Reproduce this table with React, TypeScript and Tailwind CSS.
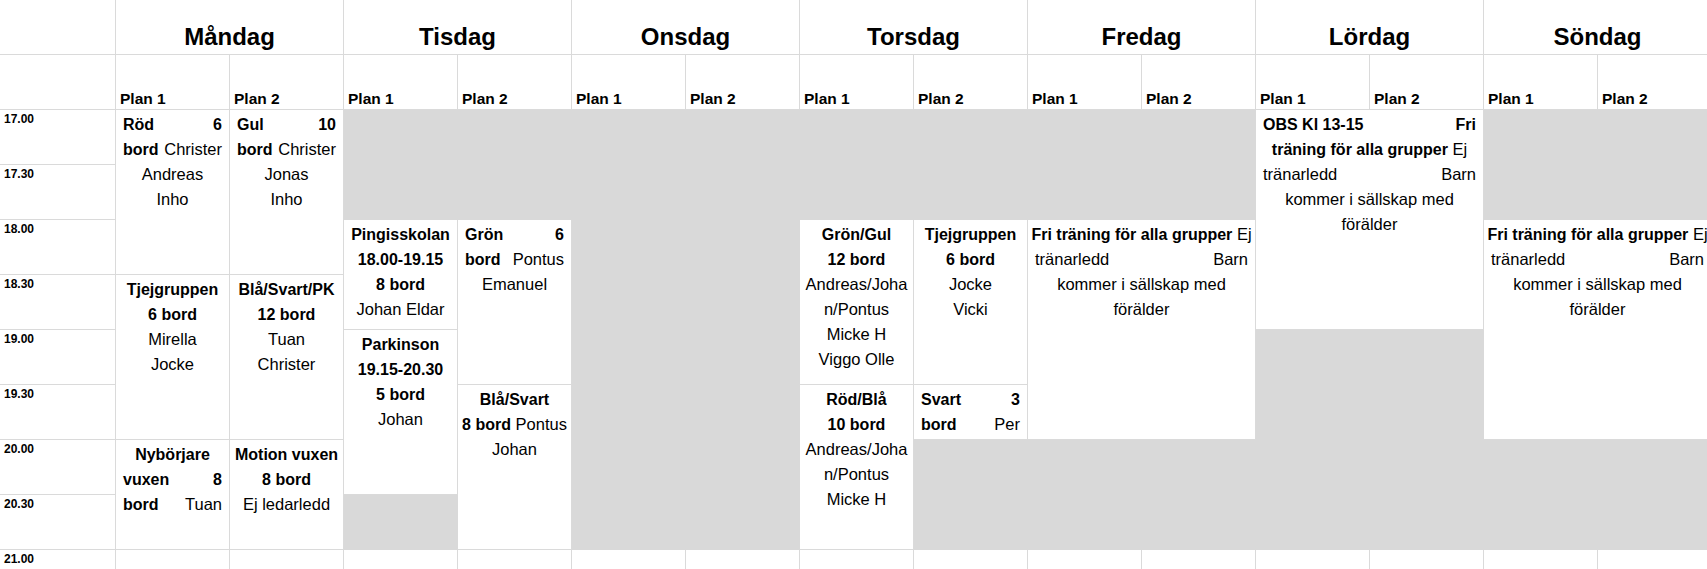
import React from 'react';
import clsx from 'clsx';

type Cell = {
  pos: string;
  lines?: string[];
  gray?: boolean;
};

const line = 'border-[#dadada]';

const days = [
  { name: 'Måndag', pos: 'col-start-2' },
  { name: 'Tisdag', pos: 'col-start-4' },
  { name: 'Onsdag', pos: 'col-start-6' },
  { name: 'Torsdag', pos: 'col-start-8' },
  { name: 'Fredag', pos: 'col-start-10' },
  { name: 'Lördag', pos: 'col-start-12' },
  { name: 'Söndag', pos: 'col-start-14' },
];

const planCols = [
  'col-start-2', 'col-start-3', 'col-start-4', 'col-start-5', 'col-start-6', 'col-start-7', 'col-start-8',
  'col-start-9', 'col-start-10', 'col-start-11', 'col-start-12', 'col-start-13', 'col-start-14', 'col-start-15',
];

const times = [
  { t: '17.00', pos: 'row-start-3' },
  { t: '17.30', pos: 'row-start-4' },
  { t: '18.00', pos: 'row-start-5' },
  { t: '18.30', pos: 'row-start-6' },
  { t: '19.00', pos: 'row-start-7' },
  { t: '19.30', pos: 'row-start-8' },
  { t: '20.00', pos: 'row-start-9' },
  { t: '20.30', pos: 'row-start-10' },
  { t: '21.00', pos: 'row-start-11' },
];

const friTraning = ['*Fri träning för alla grupper* Ej', 'tränarledd|Barn', 'kommer i sällskap med', 'förälder'];

// "|" splits a line into groups pushed to the edges, *...* is bold
const cells: Cell[] = [
  // Måndag
  { pos: 'col-start-2 row-start-3 row-span-3', lines: ['*Röd*|*6*', '*bord*|Christer', 'Andreas', 'Inho'] },
  { pos: 'col-start-3 row-start-3 row-span-3', lines: ['*Gul*|*10*', '*bord*|Christer', 'Jonas', 'Inho'] },
  { pos: 'col-start-2 row-start-6 row-span-3', lines: ['*Tjejgruppen*', '*6 bord*', 'Mirella', 'Jocke'] },
  { pos: 'col-start-3 row-start-6 row-span-3', lines: ['*Blå/Svart/PK*', '*12 bord*', 'Tuan', 'Christer'] },
  { pos: 'col-start-2 row-start-9 row-span-2', lines: ['*Nybörjare*', '*vuxen*|*8*', '*bord*|Tuan'] },
  { pos: 'col-start-3 row-start-9 row-span-2', lines: ['*Motion vuxen*', '*8 bord*', 'Ej ledarledd'] },
  // Tisdag
  { pos: 'col-start-4 col-span-2 row-start-3 row-span-2', gray: true },
  { pos: 'col-start-4 row-start-5 row-span-2', lines: ['*Pingisskolan*', '*18.00-19.15*', '*8 bord*', 'Johan Eldar'] },
  { pos: 'col-start-4 row-start-7 row-span-3', lines: ['*Parkinson*', '*19.15-20.30*', '*5 bord*', 'Johan'] },
  { pos: 'col-start-4 row-start-10', gray: true },
  { pos: 'col-start-5 row-start-5 row-span-3', lines: ['*Grön*|*6*', '*bord*|Pontus', 'Emanuel'] },
  { pos: 'col-start-5 row-start-8 row-span-3', lines: ['*Blå/Svart*', '*8 bord* Pontus', 'Johan'] },
  // Onsdag
  { pos: 'col-start-6 col-span-2 row-start-3 row-span-8', gray: true },
  // Torsdag
  { pos: 'col-start-8 col-span-2 row-start-3 row-span-2', gray: true },
  { pos: 'col-start-8 row-start-5 row-span-3', lines: ['*Grön/Gul*', '*12 bord*', 'Andreas/Joha', 'n/Pontus', 'Micke H', 'Viggo Olle'] },
  { pos: 'col-start-8 row-start-8 row-span-3', lines: ['*Röd/Blå*', '*10 bord*', 'Andreas/Joha', 'n/Pontus', 'Micke H'] },
  { pos: 'col-start-9 row-start-5 row-span-3', lines: ['*Tjejgruppen*', '*6 bord*', 'Jocke', 'Vicki'] },
  { pos: 'col-start-9 row-start-8', lines: ['*Svart*|*3*', '*bord*|Per'] },
  { pos: 'col-start-9 col-span-7 row-start-9 row-span-2', gray: true },
  // Fredag
  { pos: 'col-start-10 col-span-2 row-start-3 row-span-2', gray: true },
  { pos: 'col-start-10 col-span-2 row-start-5 row-span-4', lines: friTraning },
  // Lördag
  {
    pos: 'col-start-12 col-span-2 row-start-3 row-span-4',
    lines: ['*OBS Kl 13-15*|*Fri*', '*träning för alla grupper* Ej', 'tränarledd|Barn', 'kommer i sällskap med', 'förälder'],
  },
  { pos: 'col-start-12 col-span-2 row-start-7 row-span-2', gray: true },
  // Söndag
  { pos: 'col-start-14 col-span-2 row-start-3 row-span-2', gray: true },
  { pos: 'col-start-14 col-span-2 row-start-5 row-span-4', lines: friTraning },
];

const TextLine: React.FC<{ spec: string }> = ({ spec }) => {
  const groups = spec.split('|');
  return (
    <div className={clsx('flex whitespace-nowrap', groups.length > 1 ? 'justify-between' : 'justify-center')}>
      {groups.map((g, i) => (
        <span key={i}>
          {g.split('*').map((t, j) =>
            j % 2 ? (
              <b key={j} className="font-bold text-[16px]">
                {t}
              </b>
            ) : (
              t
            )
          )}
        </span>
      ))}
    </div>
  );
};

const App: React.FC = () => {
  return (
    <div className="w-screen h-screen overflow-hidden bg-white text-black font-['Liberation_Sans',Arial,sans-serif]">
      <div className="grid w-max grid-cols-[116px_repeat(14,114px)] grid-rows-[repeat(11,55px)]">
        <div className={clsx('col-start-1 row-start-1 border-r border-b', line)} />
        <div className={clsx('col-start-1 row-start-2 border-r border-b', line)} />

        {days.map(d => (
          <div
            key={d.name}
            className={clsx(d.pos, 'row-start-1 col-span-2 flex items-end justify-center pb-[3px] border-r border-b', line)}
          >
            <span className="text-[24px] leading-[29px] font-bold">{d.name}</span>
          </div>
        ))}

        {planCols.map((c, i) => (
          <div key={c} className={clsx(c, 'row-start-2 flex items-end pl-1 border-r border-b', line)}>
            <span className="text-[15.5px] leading-[20px] font-bold">Plan {i % 2 + 1}</span>
          </div>
        ))}

        {times.map(t => (
          <div key={t.t} className={clsx(t.pos, 'col-start-1 pl-1 pt-[1px] border-r border-b', line)}>
            <span className="block text-[12px] leading-[16px] font-bold">{t.t}</span>
          </div>
        ))}

        {cells.map((c, i) =>
          c.gray ? (
            <div key={i} className={clsx(c.pos, 'bg-[#d9d9d9]')} />
          ) : (
            <div key={i} className={clsx(c.pos, 'px-[7px] pt-[2px] text-[16.5px] leading-[25px] border-r border-b', line)}>
              {c.lines?.map((l, j) => <TextLine key={j} spec={l} />)}
            </div>
          )
        )}

        {planCols.map(c => (
          <div key={'b' + c} className={clsx(c, 'row-start-11 border-r border-b', line)} />
        ))}
      </div>
    </div>
  );
};

export default App;
